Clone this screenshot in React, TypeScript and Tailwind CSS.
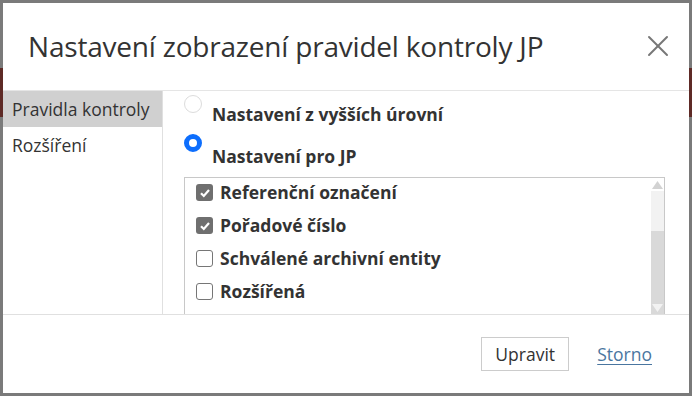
import { X } from 'lucide-react';

const font = { fontFamily: '"Open Sans", "Noto Sans", sans-serif' };

interface RowProps {
  label: string;
  checked: boolean;
}

function CheckRow({ label, checked }: RowProps) {
  return (
    <div className="flex items-center h-[33px] gap-[7px]">
      {checked ? (
        <span className="w-[17px] h-[17px] rounded-[3px] bg-[#6f6f6f] flex items-center justify-center">
          <svg width="12" height="12" viewBox="0 0 12 12">
            <path d="M2 6.2 L4.8 9 L10 3" stroke="#fff" strokeWidth="2.2" fill="none" />
          </svg>
        </span>
      ) : (
        <span className="w-[17px] h-[17px] rounded-[3px] border border-[#767676] bg-white" />
      )}
      <span className="text-[17.5px] font-bold text-[#333]">{label}</span>
    </div>
  );
}

export default function App() {
  return (
    <div
      className="w-[692px] h-[396px] p-[3px] bg-[linear-gradient(to_bottom,#7a7a7a_68px,#5e2a26_68px,#5e2a26_117px,#7a7a7a_117px)]"
      style={font}
    >
      <div className="w-[686px] h-[390px] bg-white flex flex-col">
        <div className="h-[88px] border-b border-[#e5e5e5] flex items-center justify-between pl-[25px] pr-[13px] pb-[2px]">
          <h1 className="text-[28px] text-[#333] tracking-[-0.2px]">Nastavení zobrazení pravidel kontroly JP</h1>
          <X className="w-[36px] h-[36px] text-[#777]" strokeWidth={1.3} />
        </div>
        <div className="h-[223px] flex">
          <div className="w-[160px] border-r border-[#e0e0e0] flex flex-col">
            <div className="h-[36px] bg-[#d0d0d0] flex items-center pl-[9px] text-[17.5px] text-[#333]">Pravidla kontroly</div>
            <div className="h-[36px] flex items-center pl-[9px] text-[17.5px] text-[#333]">Rozšíření</div>
          </div>
          <div className="flex-1 flex flex-col pl-[21px] pr-[24px]">
            <div className="flex items-start h-[43px] pt-[4px]">
              <span className="w-[18px] h-[18px] rounded-full border border-[#dcdcdc] bg-white" />
              <span className="ml-[10px] mt-[6px] text-[17.5px] font-bold text-[#333]">Nastavení z vyšších úrovní</span>
            </div>
            <div className="flex items-start h-[43px]">
              <span className="w-[18px] h-[18px] rounded-full border-[5px] border-[#0d6efd] bg-white" />
              <span className="ml-[10px] mt-[9px] text-[17.5px] font-bold text-[#333]">Nastavení pro JP</span>
            </div>
            <div className="flex-1 border border-b-0 border-[#c8c8c8] flex">
              <div className="flex-1 flex flex-col pl-[11px] -mt-[2px]">
                <CheckRow label="Referenční označení" checked />
                <CheckRow label="Pořadové číslo" checked />
                <CheckRow label="Schválené archivní entity" checked={false} />
                <CheckRow label="Rozšířená" checked={false} />
              </div>
              <div className="w-[13px] flex flex-col">
                <div className="h-[13px] flex items-center justify-center">
                  <svg width="13" height="10" viewBox="0 0 13 10">
                    <path d="M6.5 1 L12 9 L1 9 Z" fill="#d2d2d2" />
                  </svg>
                </div>
                <div className="h-[40px] bg-[#f2f2f2]" />
                <div className="flex-1 bg-[#d9d9d9]" />
                <div className="h-[13px] bg-[#d9d9d9] flex items-center justify-center">
                  <svg width="13" height="10" viewBox="0 0 13 10">
                    <path d="M1 1 L12 1 L6.5 9 Z" fill="#f2f2f2" />
                  </svg>
                </div>
              </div>
            </div>
          </div>
        </div>
        <div className="flex-1 border-t border-[#e0e0e0] flex items-center justify-end pr-[37px] gap-[28px]">
          <button className="h-[34px] w-[88px] border border-[#cccccc] text-[17.5px] text-[#333] bg-white">Upravit</button>
          <a className="text-[17.5px] text-[#4a76a0] underline underline-offset-[3px]">Storno</a>
        </div>
      </div>
    </div>
  );
}
